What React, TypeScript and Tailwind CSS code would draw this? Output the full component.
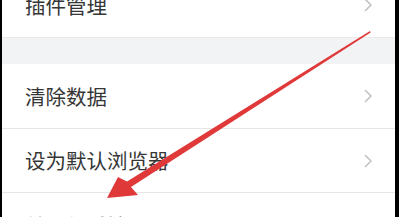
const rows = [
  { id: 'plugins', label: '插件管理', cls: 'h-[64px]' },
  { id: 'gap', label: '', cls: '' },
  { id: 'clear', label: '清除数据', cls: 'h-[65px] border-b border-[#e6e6e6]' },
  { id: 'default', label: '设为默认浏览器', cls: 'h-[64px] border-b border-[#e6e6e6]' },
  { id: 'about', label: '关于与反馈', cls: 'h-[64px]' },
];

function Chevron() {
  return (
    <svg width="9" height="14" viewBox="0 0 9 14" fill="none">
      <path d="M1.5 1.5 L7 7 L1.5 12.5" stroke="#c2c2c2" strokeWidth="1.6" strokeLinecap="round" strokeLinejoin="round" />
    </svg>
  );
}

export default function App() {
  return (
    <div
      className="relative w-[399px] h-[217px] overflow-hidden bg-white border-l-2 border-r-4 border-black"
      style={{ fontFamily: '"Noto Sans CJK SC", "Noto Sans", sans-serif' }}
    >
      <div className="flex flex-col -mt-[27px]">
        {rows.map((row) =>
          row.id === 'gap' ? (
            <div key={row.id} className="h-[27px] bg-[#f2f3f5] border-t border-[#e9eaec]" />
          ) : (
            <div key={row.id} className={`flex items-center justify-between pl-[23px] pr-[22px] bg-white ${row.cls}`}>
              <span className="text-[20.5px] text-[#363636] leading-none">{row.label}</span>
              {row.id !== 'about' && <Chevron />}
            </div>
          )
        )}
      </div>

      {/* red arrow pointing at the row */}
      <svg className="absolute inset-0 pointer-events-none" width="399" height="217" viewBox="0 0 399 217">
        <polygon
          points="105,198 116,177 125,181.5 368,31 368.6,32.4 129,187 136,195"
          fill="#e0393a"
        />
      </svg>
    </div>
  );
}
